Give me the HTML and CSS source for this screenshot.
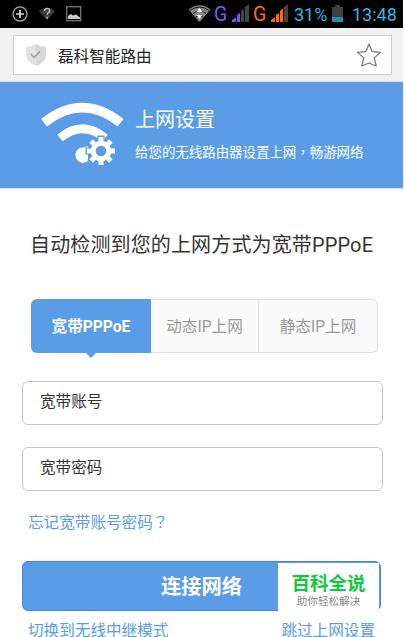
FILE: index.html
```html
<!DOCTYPE html>
<html lang="zh-CN">
<head>
    <meta charset="UTF-8">
    <title>磊科智能路由</title>
    <link rel="stylesheet" href="styles.css">
</head>
<body>
    <div class="status-bar">
        <svg width="90" height="28" viewBox="0 0 90 28">
            <circle cx="20" cy="14" r="7" fill="none" stroke="#999" stroke-width="1.5"/>
            <path d="M16 14h8M20 10v8" stroke="#ddd" stroke-width="1.7"/>
            <path d="M39 11Q47 5 55 11L47 20Z" fill="#444"/>
            <path d="M40 12Q47 7 54 12M43 15Q47 12 51 15" fill="none" stroke="#222"/>
            <path d="M44.5 11q.3-2.6 2.7-2.6 2.5 0 2.5 2.2 0 1.4-1.5 2.2-1 .5-1 1.9M47.2 16.8v1.8" fill="none" stroke="#bbb" stroke-width="1.5"/>
            <rect x="66.7" y="6.7" width="14" height="14" fill="none" stroke="#777" stroke-width="1.3"/>
            <path d="M68 19v-3l3-2 2 1.500 3-1 4 3v1.500z" fill="#ccc"/>
        </svg>
        <svg class="signals" width="136" height="28" viewBox="188 0 136 28">
            <path d="M188.500 9.500Q199.500 1 210.500 9.500L199.500 22Z" fill="#888"/>
            <path d="M190 10.500Q199.500 3.500 209 10.500M193 13.500Q199.500 8.500 206 13.500M196 17Q199.500 14 203 17" fill="none" stroke="#111" stroke-width="1"/>
            <path d="M199.500 8l3 4h-6zM199.500 19l-3-4h6z" fill="#fff"/>
            <text x="214" y="20.500" fill="#7758f5">G</text>
            <path d="M232 22v-2l4-3v5zM237 22v-7l3-2v9z" fill="#7758f5"/>
            <path d="M241 22V11l3-2v13zM245 22V7l4-3v18z" fill="#444"/>
            <text x="253" y="20.500" fill="#ff6a0b">G</text>
            <path d="M271 22v-2l4-3v5zM276 22v-7l3-2v9zM280 22V11l3-3v14z" fill="#ff6a0b"/>
            <path d="M284 22V7l4-3v18z" fill="#444"/>
        </svg>
        <span class="percent">31%</span>
        <svg class="battery" width="12" height="18" viewBox="0 0 12 18">
            <path d="M3 0h5v2h3v15H0V2h3z" fill="#404040"/>
            <path d="M0 12h11v5H0z" fill="#248fae"/>
        </svg>
        <span class="clock">13:48</span>
    </div>

    <div class="browser-bar">
        <div class="address">
            <svg width="22" height="24" viewBox="0 0 22 24">
                <path d="M11 1q4 2.500 10 3v7q0 8-10 12Q1 19 1 11V4q6-.5 10-3z" fill="#e2e2e2"/>
                <path d="M11 1q4 2.500 10 3v7q0 8-10 12z" fill="#d9d9d9"/>
                <path d="M6 11l3 3.500 6-6" fill="none" stroke="#999" stroke-width="1.3"/>
            </svg>
            <span>磊科智能路由</span>
            <svg class="star" width="26" height="26" viewBox="0 0 26 26">
                <path d="M13 2l3.200 7.700 8.300.7-6.300 5.500 2 8.100-7.200-3-7.200 3 2-8.100L1.500 10.400l8.300-.7z" fill="none" stroke="#777" stroke-width="1.200" stroke-linejoin="round"/>
            </svg>
        </div>
    </div>

    <div class="banner">
        <svg class="wifi" width="84" height="64" viewBox="0 0 84 64">
            <path d="M3 19.700Q41.300-10.500 79.600 19.700" fill="none" stroke="#fff" stroke-width="9.500"/>
            <path d="M19 35Q41.500 16.500 64 35" fill="none" stroke="#fff" stroke-width="8.500"/>
            <path d="M47 43v15q-3 2.500-7 1.500-6-2-5.500-8.500 1-6 7-6.500 3 0 5.500-1.500z" fill="#fff"/>
            <g fill="none">
                <circle cx="60" cy="48" r="8" stroke="#5a9ce6" stroke-width="8.500"/>
                <path d="M60 32.500v6M60 57.500v6M44.500 48h6M69.500 48h6M49 37l4 4M67 55l4 4M49 59l4-4M67 41l4-4" stroke="#5a9ce6" stroke-width="7"/>
                <circle cx="60" cy="48" r="7.800" stroke="#fff" stroke-width="5"/>
                <path d="M60 34v5M60 57v5M46 48h5M69 48h5M50.100 38.100l3.500 3.500M66.400 54.400l3.500 3.500M50.100 57.900l3.500-3.500M66.400 41.600l3.500-3.500" stroke="#fff" stroke-width="5"/>
            </g>
        </svg>
        <div class="banner-text">
            <h1>上网设置</h1>
            <p>给您的无线路由器设置上网<span class="mark" lang="zh-TW">，</span>畅游网络</p>
        </div>
    </div>

    <h2>自动检测到您的上网方式为宽带PPPoE</h2>

    <div class="tabs">
        <div class="tab active">宽带PPPoE</div>
        <div class="tab">动态IP上网</div>
        <div class="tab">静态IP上网</div>
    </div>

    <form>
        <input type="text" placeholder="宽带账号">
        <input type="text" placeholder="宽带密码">
        <a class="forgot">忘记宽带账号密码<span class="mark" lang="zh-TW">？</span></a>
        <div class="submit">
            <button type="button">连接网络</button>
            <div class="watermark">
                <strong>百科全说</strong>
                <small>助你轻松解决</small>
            </div>
        </div>
    </form>

    <div class="links">
        <a>切换到无线中继模式</a>
        <a>跳过上网设置</a>
    </div>
</body>
</html>
```
FILE: styles.css
```css
* {
    box-sizing: border-box;
}
body {
    margin: 0;
    width: 403px;
    height: 637px;
    overflow: hidden;
    background: #fff;
    color: #333;
    font-family: Roboto, "Noto Sans CJK SC", sans-serif;
    font-size: 15.6px;
}
h1, h2, p {
    margin: 0;
    font-weight: normal;
}
.status-bar {
    display: flex;
    height: 28px;
    background: #000;
    color: #33b5e5;
    font-size: 18px;
    line-height: 29px;
}
.signals {
    margin-left: 98px;
    font-size: 19.5px;
}
.percent {
    width: 38px;
    margin-left: -30px;
}
.battery {
    margin: 5px 0 0;
}
.clock {
    margin-left: 8px;
}
.browser-bar {
    height: 54px;
    padding: 7px 11px 0 13px;
    background: #f1f1f1;
    border-bottom: 1px solid #ddd;
}
.address {
    display: flex;
    align-items: center;
    height: 40px;
    padding: 0 9px 0 11px;
    background: #fff;
    border: 1px solid #ccc;
    color: #222;
}
.address span {
    margin-left: 11px;
}
.star {
    margin-left: auto;
}
.banner {
    display: flex;
    height: 107px;
    padding: 21px 0 0 41px;
    background: #5a9ce6;
    border-bottom: 1px solid #dce8f5;
    color: #fff;
}
.wifi {
    overflow: visible;
}
.banner-text {
    margin-left: 10px;
}
.banner h1 {
    padding-top: 1px;
    font-size: 20px;
    line-height: 32px;
}
.banner p {
    font-size: 13.45px;
    line-height: 30px;
}
.mark {
    font-family: "Noto Sans CJK TC", sans-serif;
}
h2 {
    padding: 40px 0 0 30px;
    font-size: 20px;
    line-height: 32px;
    letter-spacing: 0.14px;
    white-space: nowrap;
}
.tabs {
    display: flex;
    width: 347px;
    height: 54px;
    margin: 38px 0 0 31px;
}
.tab {
    width: 119px;
    background: #fafafa;
    border: 1px solid #e0e0e0;
    border-left: 0;
    color: #999;
    line-height: 54px;
    text-align: center;
}
.tab:nth-child(2) {
    width: 108px;
}
.tab:last-child {
    border-radius: 0 6px 6px 0;
}
.tab.active {
    position: relative;
    width: 120px;
    background: #5a9ce6;
    border-color: #5a9ce6;
    border-radius: 6px 0 0 6px;
    color: #fff;
    font-weight: bold;
    text-indent: 1px;
}
.tab.active::after {
    content: "";
    position: absolute;
    top: 53px;
    left: 55px;
    border: 5px solid transparent;
    border-top-color: #5a9ce6;
    border-bottom: 0;
}
form {
    display: flex;
    flex-direction: column;
    padding: 28px 20px 0 22px;
}
input {
    height: 44px;
    margin-bottom: 22px;
    padding: 0 17px 2px;
    border: 1px solid #c4c4c4;
    border-radius: 6px;
    font: inherit;
}
input::placeholder {
    color: #333;
}
a {
    color: #5a9ce6;
}
.forgot {
    height: 52px;
    margin-top: -4px;
    padding-left: 6px;
    line-height: 24px;
}
.submit {
    position: relative;
    height: 50px;
}
button {
    width: 359px;
    height: 50px;
    padding-bottom: 3px;
    background: #5a9ce6;
    border: 1px solid #4489d8;
    border-radius: 6px;
    color: #fff;
    font: bold 20.3px "Noto Sans CJK SC", sans-serif;
}
.watermark {
    position: absolute;
    top: 2px;
    left: 256px;
    display: flex;
    flex-direction: column;
    align-items: center;
    width: 101px;
    height: 50px;
    padding-top: 9px;
    background: #fff;
}
.watermark strong {
    color: #0bcb3b;
    font-size: 18.5px;
    line-height: 24px;
}
.watermark small {
    color: #888;
    font-size: 10.6px;
    line-height: 12px;
}
.links {
    display: flex;
    justify-content: space-between;
    padding: 8px 28px 0;
    line-height: 24px;
}
```
